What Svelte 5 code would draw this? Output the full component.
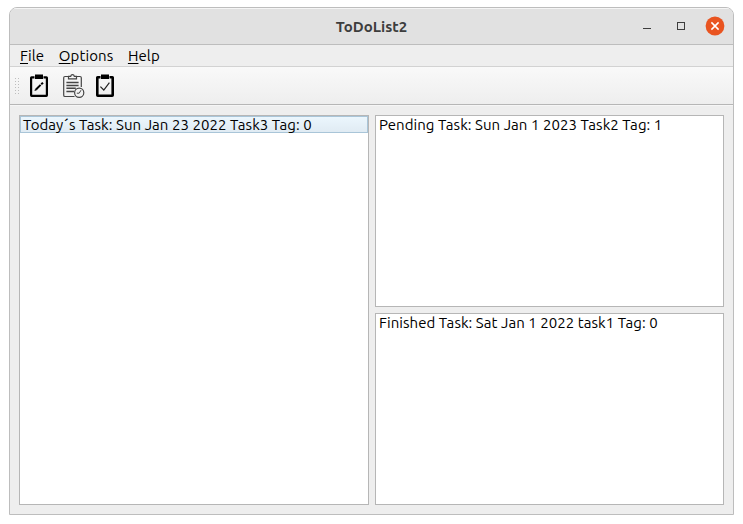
<script>
  const today = ['Today´s Task: Sun Jan 23 2022 Task3 Tag: 0'];
  const pending = ['Pending Task: Sun Jan 1 2023 Task2 Tag: 1'];
  const finished = ['Finished Task: Sat Jan 1 2022 task1 Tag: 0'];
  const menus = ['File', 'Options', 'Help'];
</script>

<main>
  <section class="window">
    <header>
      <h1>ToDoList2</h1>
      <div class="controls">
        <span class="min"></span>
        <span class="max"></span>
        <span class="close">
          <svg width="20" height="20" viewBox="0 0 20 20"><circle cx="10" cy="10" r="9.4" fill="#e95420" /><path d="M6.4 6.4l7.2 7.2M13.6 6.4l-7.2 7.2" stroke="#fff" stroke-width="1.5" /></svg>
        </span>
      </div>
    </header>
    <nav>
      {#each menus as m}
        <span><u>{m[0]}</u>{m.slice(1)}</span>
      {/each}
    </nav>
    <div class="toolbar">
      <svg class="grip" width="6" height="18" viewBox="0 0 6 18" fill="#bdbdbd">
        {#each [0, 1, 2, 3, 4, 5] as r}
          {#each [0, 1] as c}
            <rect x={c * 3} y={r * 3} width="1" height="1" />
          {/each}
        {/each}
      </svg>
      <svg class="edit" width="19" height="24" viewBox="0 0 19 24">
        <path d="M4.5 3.3H1.5Q1.1 3.3 1.1 3.8V21.3Q1.1 21.8 1.6 21.8H16.4Q16.9 21.8 16.9 21.3V3.8Q16.9 3.3 16.5 3.3H13.5" fill="none" stroke="#000" stroke-width="2.2" />
        <path d="M5 .6H13V5H5z" fill="#000" />
        <path d="M6 15.5L10.6 10.9" stroke="#000" stroke-width="2" />
        <path d="M11.2 10.3L13 8.7" stroke="#000" stroke-width="2" />
        <path d="M4.5 17L5.1 14.8L6.7 16.3z" fill="#000" />
      </svg>
      <svg class="pend" width="22" height="25" viewBox="0 0 22 25" fill="none" stroke="#454545" stroke-width="1.2">
        <path d="M5.5 2.5H2Q.7 2.5 .7 3.8V21.2Q.7 22.5 2 22.5H11.5M13.5 2.5H17Q18.3 2.5 18.3 3.8V13" />
        <path d="M5.5 4.8V2.4H7.7Q8 .7 9.5 .7T11.3 2.4H13.5V4.8z" />
        <path d="M3.4 8.5H15.6M3.4 11.5H15.6M3.4 14.2H12.8M3.4 17.5H11" stroke-width="1.4" />
        <circle cx="16.2" cy="18.8" r="4.6" fill="#f3f3f3" />
        <path d="M18 16.2L16.2 19.2H13.8" stroke-width="1" />
      </svg>
      <svg class="done" width="19" height="24" viewBox="0 0 19 24">
        <path d="M4.5 3.3H1.7Q1.3 3.3 1.3 3.8V21.2Q1.3 21.7 1.8 21.7H16.2Q16.7 21.7 16.7 21.2V3.8Q16.7 3.3 16.3 3.3H13.5" fill="none" stroke="#000" stroke-width="2.6" />
        <path d="M5 .4H13V5H5z" fill="#000" />
        <path d="M4.4 12.6L7.8 16L13.4 8.6" fill="none" stroke="#222" stroke-width="1.2" />
      </svg>
    </div>
    <div class="body">
      <ul class="today">
        {#each today as t}<li class="selected">{t}</li>{/each}
      </ul>
      <div class="side">
        <ul>
          {#each pending as t}<li>{t}</li>{/each}
        </ul>
        <ul>
          {#each finished as t}<li>{t}</li>{/each}
        </ul>
      </div>
    </div>
  </section>
</main>

<style>
  :global(body) { background: #fff; }
  main {
    box-sizing: border-box;
    width: 743px;
    height: 524px;
    padding: 7px 9px 9px;
    font: 15px/18px "Ubuntu", "Noto Sans", sans-serif;
    color: #000;
  }
  .window {
    box-sizing: border-box;
    width: 725px;
    height: 508px;
    border: 1px solid #bdbdbd;
    border-radius: 8px 8px 0 0;
    background: #eee;
    display: flex;
    flex-direction: column;
    overflow: hidden;
  }
  header {
    box-sizing: border-box;
    height: 37px;
    flex: none;
    display: grid;
    grid-template-columns: 1fr auto 1fr;
    align-items: center;
    background: #e1e1e1;
    border-top: 1px solid #f5f5f5;
    border-bottom: 1px solid #bdbdbd;
  }
  h1 {
    grid-column: 2;
    margin: 0;
    font-size: 15px;
    line-height: 20px;
    font-weight: 700;
    color: #3d3d3d;
  }
  .controls {
    display: flex;
    justify-content: flex-end;
    align-items: center;
    padding-right: 8px;
  }
  .min { width: 8px; height: 1px; background: #3d3d3d; margin: 3px 26px 0 0; }
  .max { box-sizing: border-box; width: 8px; height: 8px; border: 1px solid #3d3d3d; margin: -2px 20px 0 0; }
  .close { height: 20px; margin-top: -1px; }
  .close svg { display: block; }
  nav {
    box-sizing: border-box;
    height: 22px;
    flex: none;
    display: flex;
    gap: 14.5px;
    padding: 2px 10px 0;
    letter-spacing: 0.12px;
    border-bottom: 1px solid #d2d2d2;
  }
  u { text-underline-offset: 2px; text-decoration-thickness: 1px; text-decoration-skip-ink: none; }
  .toolbar {
    box-sizing: border-box;
    height: 38px;
    flex: none;
    display: flex;
    align-items: flex-start;
    padding: 7px 0 0 5px;
    background: linear-gradient(#f9f9f9, #eee);
    border-bottom: 1px solid #b6b6b6;
  }
  .grip { margin-top: 4px; }
  .edit { margin-left: 9px; }
  .pend { margin-left: 14px; }
  .done { margin-left: 11px; }
  .body {
    flex: 1;
    display: flex;
    gap: 6px;
    padding: 9px;
    border-top: 1px solid #f6f6f6;
    min-height: 0;
  }
  ul {
    box-sizing: border-box;
    margin: 0;
    padding: 0;
    list-style: none;
    background: #fff;
    border: 1px solid #b6b6b6;
  }
  .today { width: 350px; flex: none; }
  .side { flex: 1; display: flex; flex-direction: column; gap: 6px; }
  .side ul { flex: 1; }
  li {
    box-sizing: border-box;
    height: 17px;
    padding: 0 3px;
    line-height: 17px;
    letter-spacing: 0.055px;
    white-space: nowrap;
  }
  .selected {
    padding: 0 2px;
    line-height: 15px;
    border: 1px solid #a9c5d8;
    background: linear-gradient(#ebf6fd, #e0ebf3);
  }
</style>
